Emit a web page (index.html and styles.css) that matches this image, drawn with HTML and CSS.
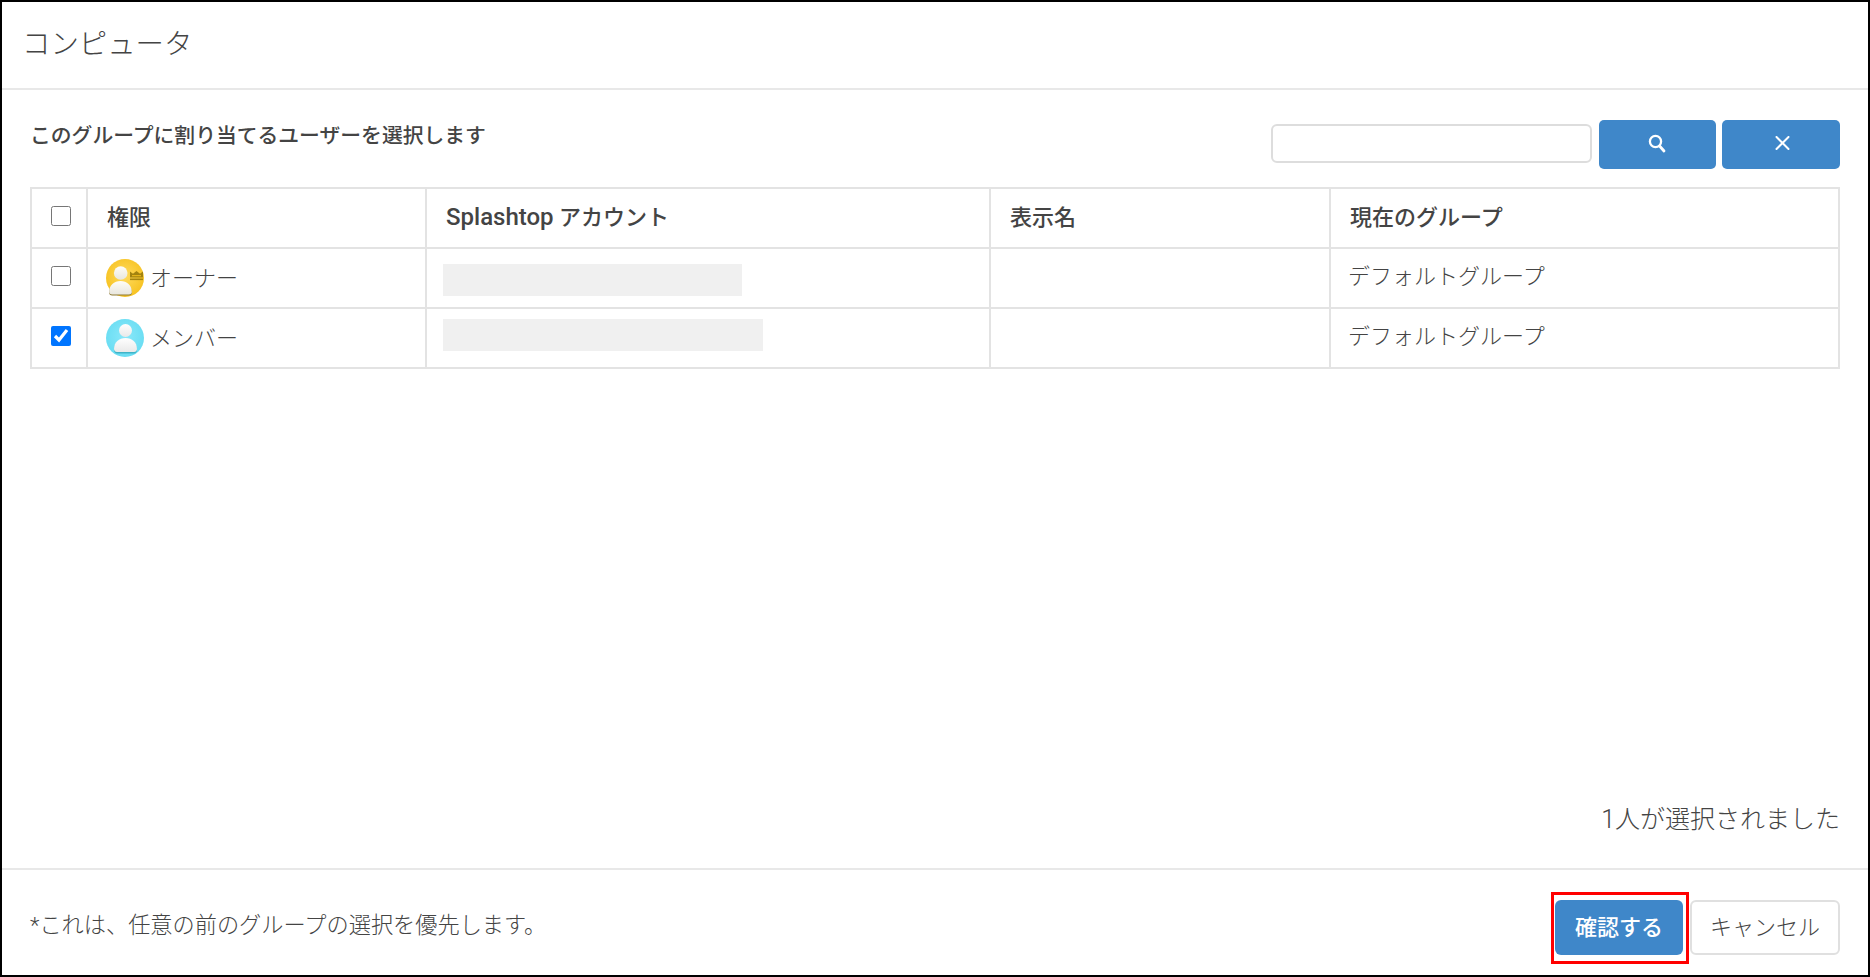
FILE: index.html
```html
<!DOCTYPE html>
<html lang="ja">
<head>
<meta charset="utf-8">
<title>コンピュータ</title>
<link rel="stylesheet" href="styles.css">
</head>
<body>
<div class="dialog">
  <header class="head"><h1 class="title">コンピュータ</h1></header>
  <main class="content">
    <div class="toolbar">
      <p class="lead">このグループに割り当てるユーザーを選択します</p>
      <div class="search">
        <input class="search-input" type="text" aria-label="検索">
        <button class="btn-icon btn-find" aria-label="検索">
          <svg width="18" height="19" viewBox="0 0 18 19"><circle cx="7.500" cy="7.500" r="5.600" fill="none" stroke="#fff" stroke-width="2.300"/><path d="M11.600 12L16 17" stroke="#fff" stroke-width="2.800" stroke-linecap="round"/></svg>
        </button>
        <button class="btn-icon btn-close" aria-label="クリア">
          <svg width="15" height="14" viewBox="0 0 15 14"><path d="M1.500 1L13.500 13M13.500 1L1.500 13" stroke="#fff" stroke-width="2" stroke-linecap="round"/></svg>
        </button>
      </div>
    </div>
    <table class="users">
      <colgroup><col class="c1"><col class="c2"><col class="c3"><col class="c4"><col></colgroup>
      <thead>
        <tr>
          <th class="check"><input class="box" type="checkbox"></th>
          <th>権限</th>
          <th><span class="brand">Splashtop</span> アカウント</th>
          <th>表示名</th>
          <th>現在のグループ</th>
        </tr>
      </thead>
      <tbody>
        <tr>
          <td class="check"><input class="box" type="checkbox"></td>
          <td><span class="role">
            <svg class="avatar" viewBox="0 0 38 38"><defs><radialGradient id="g1" cx="50%" cy="45%" r="60%"><stop offset="0" stop-color="#ffdb5e"/><stop offset="1" stop-color="#f6c01c"/></radialGradient><linearGradient id="p1" x1="0" y1="0" x2="0" y2="1"><stop offset="0" stop-color="#fffdf6"/><stop offset="1" stop-color="#e8e6de"/></linearGradient></defs><circle cx="19" cy="19" r="19" fill="url(#g1)"/><circle cx="14.700" cy="14" r="6.800" fill="url(#p1)"/><path d="M3.200 34c0-7 4.800-11 11.300-11S25.800 27 25.800 34c0 1.500-1 2.500-3 2.500H6.200c-2 0-3-1-3-2.500z" fill="#8d7a35"/><path d="M3.200 33c0-7 4.800-11 11.300-11S25.800 26 25.800 33c0 1.500-1 2.500-3 2.500H6.200c-2 0-3-1-3-2.500z" fill="url(#p1)"/><path d="M24 18.500V12.500l3 2.200 3.500-2.800 3.500 2.800 3-2.200v6z" fill="#a3830f"/><path d="M26 16.200h9v1h-9z" fill="#f6c01c"/><rect x="24" y="19.500" width="13" height="1.600" fill="#a3830f"/></svg>
            オーナー</span></td>
          <td class="mask-cell"><span class="mask mask-a"></span></td>
          <td></td>
          <td>デフォルトグループ</td>
        </tr>
        <tr>
          <td class="check"><input class="box" type="checkbox" checked></td>
          <td><span class="role">
            <svg class="avatar" viewBox="0 0 38 38"><defs><radialGradient id="g2" cx="50%" cy="45%" r="60%"><stop offset="0" stop-color="#8ae8fa"/><stop offset="1" stop-color="#66dcf2"/></radialGradient><linearGradient id="p2" x1="0" y1="0" x2="0" y2="1"><stop offset="0" stop-color="#fefefe"/><stop offset="1" stop-color="#e9e9e9"/></linearGradient></defs><circle cx="19" cy="19" r="19" fill="url(#g2)"/><circle cx="19.500" cy="11.500" r="6.500" fill="url(#p2)"/><path d="M8 31c0-7 5-11 11.500-11S31 24 31 31c0 1.500-1 3.500-3 3.500H11c-2 0-3-2-3-3.500z" fill="#3fb4c8"/><path d="M8 30c0-7 5-11 11.500-11S31 23 31 30c0 1.500-1 3-3 3H11c-2 0-3-1.500-3-3z" fill="url(#p2)"/></svg>
            メンバー</span></td>
          <td class="mask-cell"><span class="mask mask-b"></span></td>
          <td></td>
          <td>デフォルトグループ</td>
        </tr>
      </tbody>
    </table>
    <p class="count">1人が選択されました</p>
  </main>
  <footer class="foot">
    <p class="note">*これは、任意の前のグループの選択を優先します。</p>
    <div class="actions">
      <button class="btn btn-primary">確認する</button>
      <button class="btn btn-plain">キャンセル</button>
    </div>
  </footer>
</div>
</body>
</html>
```
FILE: styles.css
```css
* { box-sizing: border-box; }
html, body { margin: 0; padding: 0; height: 100%; }
body {
  font-family: Roboto, "Noto Sans CJK JP", sans-serif;
  color: #444;
  background: #fff;
}
.dialog {
  height: 977px;
  border: 2px solid #000;
  display: flex;
  flex-direction: column;
  overflow: hidden;
}
.head {
  height: 88px;
  flex: none;
  border-bottom: 2px solid #e8e8e8;
  padding: 0 0 0 20px;
  display: flex;
  align-items: center;
}
.title {
  margin: -7px 0 0;
  font-size: 28.4px;
  font-weight: 300;
  color: #444;
}
.content {
  flex: 1;
  padding: 30px 28px 0;
  display: flex;
  flex-direction: column;
}
.toolbar {
  display: flex;
  justify-content: space-between;
  align-items: flex-start;
  height: 67px;
}
.lead {
  margin: 0;
  padding-top: 1px;
  font-size: 20.8px;
  font-weight: 500;
  line-height: 30px;
  color: #444;
}
.search { display: flex; align-items: center; height: 49px; }
.search-input {
  width: 321px;
  height: 39px;
  border: 2px solid #ddd;
  border-radius: 6px;
  background: #fff;
  margin: 0 7px 2px 0;
}
.btn-icon {
  width: 117px;
  height: 49px;
  border: 0;
  border-radius: 5px;
  background: #3f87c9;
  display: flex;
  align-items: center;
  justify-content: center;
  padding: 0 0 3px;
}
.btn-find { padding-right: 2px; }
.btn-close { width: 118px; margin-left: 6px; padding-left: 2px; }
.users {
  width: 1810px;
  table-layout: fixed;
  border-collapse: collapse;
  font-size: 22px;
  color: #555;
}
.c1 { width: 56px; }
.c2 { width: 339px; }
.c3 { width: 564px; }
.c4 { width: 340px; }
.users th, .users td {
  border: 2px solid #e3e3e3;
  height: 60px;
  padding: 0 19px 6px;
  text-align: left;
  vertical-align: middle;
}
.users td { padding: 0 19px 4px 18px; }
.users th { font-weight: 500; color: #444; font-size: 22px; }
.brand { font-size: 24px; }
.users .check { padding: 0 0 7px 4px; text-align: center; }
.box { width: 20px; height: 20px; margin: 0; vertical-align: middle; }
.role { display: flex; align-items: center; gap: 6px; font-weight: 300; color: #444; }
.users td:last-child { padding: 0 19px 8px 17px; font-weight: 300; color: #444; }
.avatar { width: 38px; height: 38px; flex: none; margin-top: 3px; }
.users .mask-cell { padding: 0 0 0 16px; vertical-align: top; }
.mask { display: block; height: 32px; background: #f0f0f0; }
.mask-a { width: 299px; margin-top: 15px; }
.mask-b { width: 320px; margin-top: 10px; }
.count {
  margin: auto 0 32px;
  text-align: right;
  font-size: 25px;
  font-weight: 300;
  line-height: 32px;
  color: #444;
}
.foot {
  height: 107px;
  flex: none;
  border-top: 2px solid #e8e8e8;
  padding: 30px 28px 0;
  display: flex;
  justify-content: space-between;
  align-items: flex-start;
}
.note { margin: 0; padding-top: 9px; font-size: 22.2px; font-weight: 300; line-height: 32px; color: #444; }
.actions { display: flex; gap: 7px; }
.btn {
  position: relative;
  height: 55px;
  border-radius: 6px;
  font: inherit;
  font-size: 22px;
  padding: 0 0 6px;
}
.btn-primary {
  width: 128px;
  border: 0;
  background: #3f87c9;
  color: #fff;
  font-weight: 500;
}
.btn-primary::after {
  content: "";
  box-sizing: border-box;
  position: absolute;
  left: -4px;
  top: -8px;
  width: 138px;
  height: 72px;
  border: 3px solid #f00;
}
.btn-plain {
  width: 150px;
  border: 2px solid #e0e0e0;
  background: #fff;
  color: #444;
  font-weight: 300;
}
```
